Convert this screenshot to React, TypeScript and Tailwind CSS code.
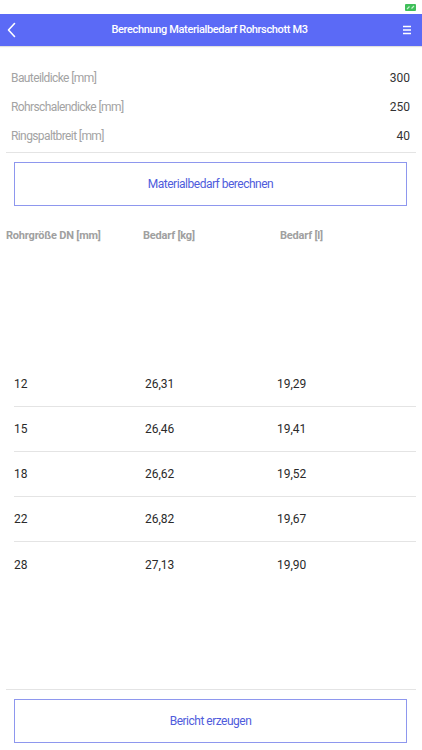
import React from "react"

const inputs = [
    { label: "Bauteildicke [mm]", value: "300" },
    { label: "Rohrschalendicke [mm]", value: "250" },
    { label: "Ringspaltbreit [mm]", value: "40" },
]

const rows = [
    ["12", "26,31", "19,29"],
    ["15", "26,46", "19,41"],
    ["18", "26,62", "19,52"],
    ["22", "26,82", "19,67"],
    ["28", "27,13", "19,90"],
]

function App() {
    return (
        <div className="w-[422px] h-[750px] bg-white flex flex-col font-['Roboto',sans-serif] overflow-hidden">
            {/* status bar */}
            <div className="h-[14px] flex items-center justify-end pr-[6px]">
                <svg width="11" height="7" viewBox="0 0 11 7">
                    <rect x="0" y="0" width="11" height="7" rx="1" fill="#3fbf5a" />
                    <path d="M2 5 L4.5 2.5 M6.5 4.5 L9 2" stroke="#c9f2d1" strokeWidth="1.2" />
                </svg>
            </div>

            {/* header */}
            <div className="h-[32px] bg-[#5b6af6] flex items-center px-[7px] shadow-[0_1px_1px_rgba(0,0,0,0.12)]">
                <svg width="10" height="16" viewBox="0 0 10 16" className="shrink-0">
                    <path d="M7.5 1.5 L1.5 8 L7.5 14.5" fill="none" stroke="white" strokeWidth="1.6" strokeLinecap="round" strokeLinejoin="round" />
                </svg>
                <div className="flex-1 text-center text-white text-[11px] font-medium tracking-[-0.35px]">
                    Berechnung Materialbedarf Rohrschott M3
                </div>
                <svg width="10" height="10" viewBox="0 0 10 10" className="shrink-0 mr-[3px]">
                    <path d="M1 1.5 H9 M1 5 H9 M1 8.5 H9" stroke="white" strokeWidth="1.4" />
                </svg>
            </div>

            {/* inputs */}
            <div className="pt-[17px] px-[6px]">
                <div className="pb-[2px] border-b border-[#e4e4e4]">
                    {inputs.map((it) => (
                        <div key={it.label} className="h-[29px] flex items-center justify-between pl-[5px] pr-[6px]">
                            <span className="text-[12px] text-[#a3a3a3] tracking-[-0.6px]">{it.label}</span>
                            <span className="text-[12px] text-[#333333]">{it.value}</span>
                        </div>
                    ))}
                </div>
            </div>

            <div className="pt-[9px] pl-[14px] pr-[15px]">
                <button className="w-full h-[44px] border border-[#8e97ee] text-[#4f5cdc] text-[12px] tracking-[-0.5px]">
                    Materialbedarf berechnen
                </button>
            </div>

            {/* table header */}
            <div className="mt-[20px] h-[20px] flex items-center text-[11px] font-bold text-[#a0a0a0] tracking-[-0.2px]">
                <span className="pl-[6px] w-[143px]">Rohrgröße DN [mm]</span>
                <span className="w-[137px]">Bedarf [kg]</span>
                <span>Bedarf [l]</span>
            </div>

            {/* table rows */}
            <div className="mt-[116px] pl-[14px] pr-[6px]">
                {rows.map((r, i) => (
                    <div key={r[0]} className={"h-[45px] flex items-center text-[12px] text-[#2a2a2a] " + (i < rows.length - 1 ? "border-b border-[#e4e4e4]" : "")}>
                        <span className="w-[131px]">{r[0]}</span>
                        <span className="w-[132px]">{r[1]}</span>
                        <span>{r[2]}</span>
                    </div>
                ))}
            </div>

            <div className="flex-1" />

            <div className="px-[6px]">
                <div className="border-t border-[#e4e4e4]" />
            </div>
            <div className="pt-[9px] pb-[7px] pl-[14px] pr-[15px]">
                <button className="w-full h-[44px] border border-[#8e97ee] text-[#4f5cdc] text-[12px] tracking-[-0.5px]">
                    Bericht erzeugen
                </button>
            </div>
        </div>
    )
}

export default App
